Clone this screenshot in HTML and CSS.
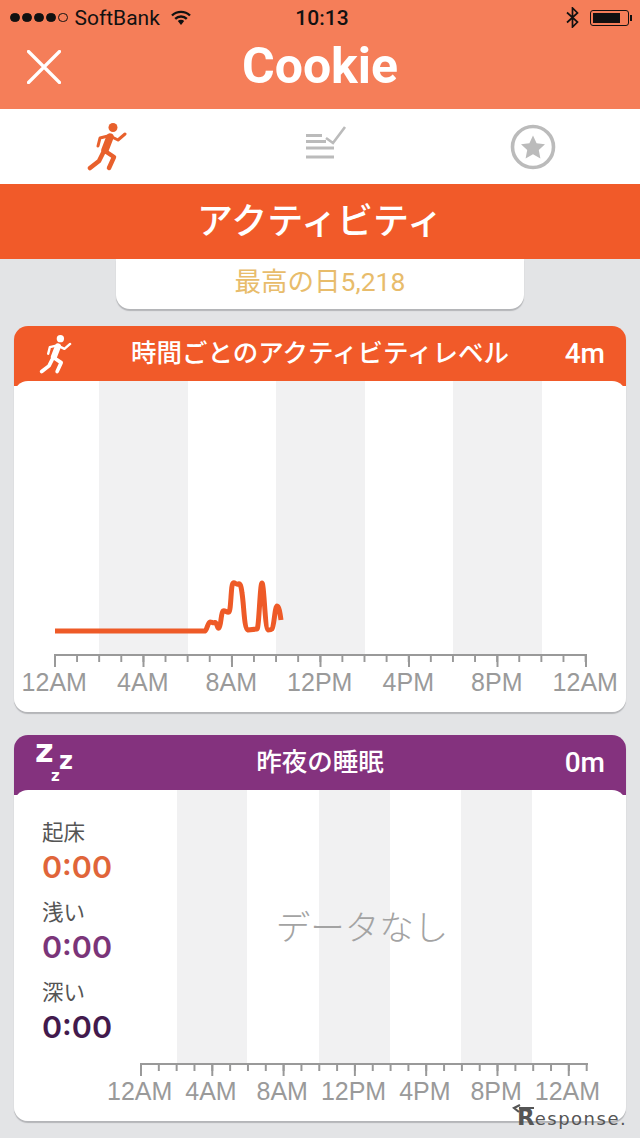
FILE: index.html
```html
<!DOCTYPE html>
<html lang="ja">
<head>
    <meta charset="UTF-8">
    <meta name="viewport" content="width=device-width, initial-scale=1.0">
    <title>Cookie - アクティビティ</title>
    <link rel="stylesheet" href="styles.css">
</head>
<body>
    <svg class="defs" width="0" height="0">
        <symbol id="runner" viewBox="0 0 40 48">
            <circle cx="26" cy="4.5" r="4.5" fill="currentColor"/>
            <g fill="none" stroke="currentColor" stroke-linecap="round" stroke-linejoin="round">
                <path d="M23 14 18 27" stroke-width="7.5"/>
                <path d="M23 13 31 17 38 11" stroke-width="3"/>
                <path d="M21 13 13 15 11 23" stroke-width="3"/>
                <path d="M18 28 27 34 22 45" stroke-width="4.5"/>
                <path d="M16 30 12 38 3 45" stroke-width="4.5"/>
            </g>
        </symbol>
    </svg>

    <header class="top">
        <div class="status">
            <div class="status-left">
                <span class="dots"><i></i><i></i><i></i><i></i><i class="off"></i></span>
                <span class="carrier">SoftBank</span>
                <svg class="wifi" width="20" height="15" viewBox="0 0 20 15">
                    <path d="M1 5.5a13 13 0 0 1 18 0M4.2 8.8a8.4 8.4 0 0 1 11.6 0" fill="none" stroke="#111" stroke-width="2.4"/>
                    <path d="M6.8 11a4.6 4.6 0 0 1 6.4 0L10 15z" fill="#111"/>
                </svg>
            </div>
            <span class="clock">10:13</span>
            <div class="status-right">
                <svg width="13" height="21" viewBox="0 0 13 21">
                    <path d="M1 5.5 11.5 15 6.5 20V1l5 5L1 15.5" fill="none" stroke="#111" stroke-width="1.7"/>
                </svg>
                <span class="battery"><span class="battery-level"></span></span>
            </div>
        </div>
        <div class="titlebar">
            <svg class="close" width="34" height="34" viewBox="0 0 34 34">
                <path d="M1.5 1.5 32.5 32.5M32.5 1.5 1.5 32.5" stroke="#fff" stroke-width="3.2" stroke-linecap="round"/>
            </svg>
            <h1>Cookie</h1>
        </div>
    </header>

    <nav class="tabs">
        <svg class="tab-run" width="40" height="48"><use href="#runner"/></svg>
        <svg class="tab-list" width="42" height="34" viewBox="0 0 42 34">
            <path d="M1 9.500H17M1 15.500H21M1 22H29M1 31H29" stroke="#bbb" stroke-width="3.200" fill="none"/>
            <path d="M21 12 28 17 40 1" stroke="#bbb" stroke-width="2.600" fill="none"/>
        </svg>
        <svg width="46" height="46" viewBox="0 0 46 46">
            <circle cx="23" cy="23" r="20.500" fill="none" stroke="#bbb" stroke-width="3.600"/>
            <path d="M23 11.500 26.600 19.300 35 20.300 28.800 26 30.400 34.500 23 30.300 15.600 34.500 17.200 26 11 20.300 19.400 19.300z" fill="#bbb"/>
        </svg>
    </nav>

    <h2 class="section-title">アクティビティ</h2>

    <main class="content">
        <div class="best-day">最高の日5,218</div>

        <section class="card card-activity">
            <div class="card-head">
                <svg class="head-icon" width="33" height="39"><use href="#runner"/></svg>
                <h3>時間ごとのアクティビティレベル</h3>
                <span class="head-value">4m</span>
            </div>
            <div class="card-body">
                <div class="plot plot-day">
                    <i></i><i></i><i></i><i></i><i></i><i></i><i></i>
                    <svg class="line" viewBox="14 380 612 273">
                        <path d="M55 630H205C207 629 208 621 210 621C212 621 213 622.500 215 621.500C217 621 217 628 219 627C221 626 221 611 223 610C225 609 227 612 229 611C231 610 231 582 233 582C235 581 236 584 238 583C240 582 241 584 242 592C244 604 244 628 248 629L257 628C259 628 260 582 262 582C264 582 265 628 268 629C270 629 271 629 272 628C274 626 275 605 277 605C279 605 280 612 281 619"/>
                    </svg>
                </div>
                <div class="axis axis-day"></div>
                <div class="labels labels-day">
                    <span>12AM</span><span>4AM</span><span>8AM</span><span>12PM</span><span>4PM</span><span>8PM</span><span>12AM</span>
                </div>
            </div>
        </section>

        <section class="card card-sleep">
            <div class="card-head">
                <div class="zzz"><b class="z1">z</b><b class="z2">z</b><b class="z3">z</b></div>
                <h3>昨夜の睡眠</h3>
                <span class="head-value">0m</span>
            </div>
            <div class="card-body">
                <div class="sleep-row">
                    <div class="stats">
                        <div class="stat"><span>起床</span><strong class="awake">0:00</strong></div>
                        <div class="stat"><span>浅い</span><strong class="light">0:00</strong></div>
                        <div class="stat"><span>深い</span><strong class="deep">0:00</strong></div>
                    </div>
                    <div class="plot plot-sleep">
                        <i></i><i></i><i></i><i></i><i></i><i></i><i></i>
                        <p class="no-data">データなし</p>
                    </div>
                </div>
                <div class="axis axis-sleep"></div>
                <div class="labels labels-sleep">
                    <span>12AM</span><span>4AM</span><span>8AM</span><span>12PM</span><span>4PM</span><span>8PM</span><span>12AM</span>
                </div>
            </div>
        </section>
    </main>

    <div class="watermark">
        <svg width="24" height="10" viewBox="0 0 24 10">
            <path d="M22 4H7M8 1 2 4l5 4" fill="none" stroke="#555" stroke-width="2.200"/>
        </svg>
        <span class="mark-text"><b>R</b>esponse.</span>
    </div>
</body>
</html>
```

FILE: styles.css
```css
* {
    box-sizing: border-box;
}
body {
    position: relative;
    width: 640px;
    height: 1138px;
    margin: 0;
    overflow: hidden;
    background: #e3e4e6;
    font-family: "Liberation Sans", "Noto Sans CJK JP", sans-serif;
}
.defs {
    position: absolute;
}

/* orange top area */
.top {
    height: 109px;
    background: #f57e59;
}
.status {
    display: grid;
    grid-template-columns: 1fr auto 1fr;
    align-items: center;
    height: 35px;
    padding: 0 10px;
    color: #111;
}
.status-left, .status-right {
    display: flex;
    align-items: center;
}
.status-right {
    justify-content: flex-end;
    gap: 11px;
    padding-right: 1px;
}
.dots {
    display: flex;
    gap: 2.500px;
    margin-right: 7px;
}
.dots i {
    width: 9.500px;
    height: 9.500px;
    border-radius: 50%;
    background: #111;
    border: 1px solid #111;
}
.dots i.off {
    background: none;
}
.carrier {
    font-family: Roboto, sans-serif;
    font-size: 21px;
    margin-right: 11px;
}
.clock {
    font-family: Roboto, sans-serif;
    font-size: 21px;
    font-weight: 500;
    position: relative;
    left: 2px;
}
.battery {
    position: relative;
    display: block;
    width: 39px;
    height: 16px;
    padding: 2px;
    border: 1px solid #111;
    border-radius: 3px;
}
.battery::after {
    content: "";
    position: absolute;
    right: -4px;
    top: 4px;
    width: 2px;
    height: 6px;
    background: #111;
}
.battery-level {
    display: block;
    width: 82%;
    height: 100%;
    background: #111;
}
.titlebar {
    position: relative;
    text-align: center;
}
.close {
    position: absolute;
    left: 27px;
    top: 15px;
}
.titlebar h1 {
    margin: 0;
    font-family: Roboto, sans-serif;
    font-size: 50px;
    font-weight: 700;
    line-height: 62px;
    color: #fff;
}

/* tabs */
.tabs {
    display: grid;
    grid-template-columns: repeat(3, 1fr);
    justify-items: center;
    align-items: center;
    height: 75px;
    background: #fff;
}
.tab-run {
    color: #e8602c;
}
.tab-list {
    margin: 0 0 8px 12px;
}
.section-title {
    margin: 0;
    height: 75px;
    font-size: 36px;
    font-weight: 500;
    line-height: 75px;
    text-align: center;
    color: #fff;
    background: #f15a29;
}

.content {
    padding: 0 14px;
}
.best-day {
    width: 408px;
    height: 50px;
    margin: 0 auto 17px;
    font-family: Roboto, "Noto Sans CJK JP", sans-serif;
    font-size: 26.500px;
    line-height: 46px;
    text-align: center;
    color: #e8bc6b;
    background: #fff;
    border-radius: 0 0 14px 14px;
    box-shadow: 0 2px 1px #b4b5b8;
}

/* cards */
.card {
    height: 386px;
    margin-bottom: 23px;
    border-radius: 14px;
    box-shadow: 0 2px 1px #b4b5b8;
}
.card-activity {
    background: linear-gradient(#f15a29 60px, #fff 60px);
}
.card-sleep {
    background: linear-gradient(#84327e 60px, #fff 60px);
}
.card-head {
    position: relative;
    height: 55px;
    color: #fff;
    text-align: center;
}
.card-head h3 {
    margin: 0;
    font-size: 25.500px;
    font-weight: 500;
    line-height: 55px;
}
.head-icon {
    position: absolute;
    left: 25px;
    top: 9px;
}
.head-value {
    position: absolute;
    right: 21px;
    top: 0;
    font-family: Roboto, sans-serif;
    font-size: 28px;
    font-weight: 500;
    line-height: 56px;
}
.zzz {
    position: absolute;
    left: 21px;
    top: 0;
    font-family: "DejaVu Sans", sans-serif;
}
.zzz b {
    position: absolute;
    font-weight: 700;
    line-height: 0.6;
}
.z1 {
    left: 0;
    top: 7px;
    font-size: 32px;
}
.z2 {
    left: 24px;
    top: 19px;
    font-size: 24px;
}
.z3 {
    left: 16px;
    top: 37px;
    font-size: 15px;
}
.card-body {
    border-radius: 14px 14px 0 0;
    background: #fff;
}

/* charts */
.plot {
    position: relative;
    display: grid;
    height: 273px;
}
.plot i:nth-of-type(even) {
    background: #f1f1f2;
}
.plot-day {
    grid-template-columns: 85px repeat(5, 88.500px) 1fr;
}
.plot-sleep {
    flex: 1;
    grid-template-columns: 37px 70px 72px 71px 71px 71px 1fr;
}
.line {
    position: absolute;
    left: 0;
    top: 0;
    width: 100%;
    height: 100%;
}
.line path {
    fill: none;
    stroke: #ee5a27;
    stroke-width: 5;
    stroke-linejoin: round;
}
.axis {
    height: 13px;
    border-top: 2px solid #999;
    background-image: linear-gradient(90deg, #999 2px, transparent 2px), linear-gradient(90deg, #999 1.500px, transparent 1.500px);
    background-repeat: repeat-x;
}
.axis-day {
    width: 533px;
    margin-left: 40px;
    background-size: 88.500px 11px, 22.120px 6px;
}
.axis-sleep {
    width: 448px;
    margin-left: 126px;
    background-size: 71.300px 11px, 17.830px 6px;
}
.labels {
    display: grid;
    font-size: 25px;
    line-height: 30px;
    text-align: center;
    white-space: nowrap;
    color: #9a9a9a;
}
.labels-day {
    grid-template-columns: repeat(7, 88.500px);
    margin-left: -4px;
}
.labels-sleep {
    grid-template-columns: repeat(7, 71.300px);
    margin-left: 90px;
}

/* sleep card */
.sleep-row {
    display: flex;
}
.stats {
    flex: none;
    width: 126px;
    padding: 29px 0 0 28px;
}
.stat {
    display: flex;
    flex-direction: column;
    height: 80px;
}
.stat span {
    font-size: 21.500px;
    line-height: 28px;
    color: #555;
}
.stat strong {
    font-family: Inter, sans-serif;
    font-size: 30.500px;
    font-weight: 600;
    line-height: 40px;
}
.awake {
    color: #e0653a;
}
.light {
    color: #7b3579;
}
.deep {
    color: #431a4d;
}
.no-data {
    position: absolute;
    left: 0;
    right: 42px;
    top: 116px;
    margin: 0;
    font-size: 34.500px;
    font-weight: 300;
    line-height: 44px;
    text-align: center;
    color: #a3a3a3;
}

/* site mark in the corner */
.watermark {
    position: absolute;
    left: 512px;
    top: 1103px;
    width: 120px;
    height: 28px;
}
.watermark svg {
    position: absolute;
    left: 0;
    top: 1px;
}
.mark-text {
    display: block;
    padding: 1px 0 0 5px;
    font-family: "DejaVu Sans", sans-serif;
    font-size: 18px;
    line-height: 26px;
    letter-spacing: 1.500px;
    white-space: nowrap;
    color: #555;
}
.mark-text b {
    font-size: 23px;
    letter-spacing: 0;
}
```
